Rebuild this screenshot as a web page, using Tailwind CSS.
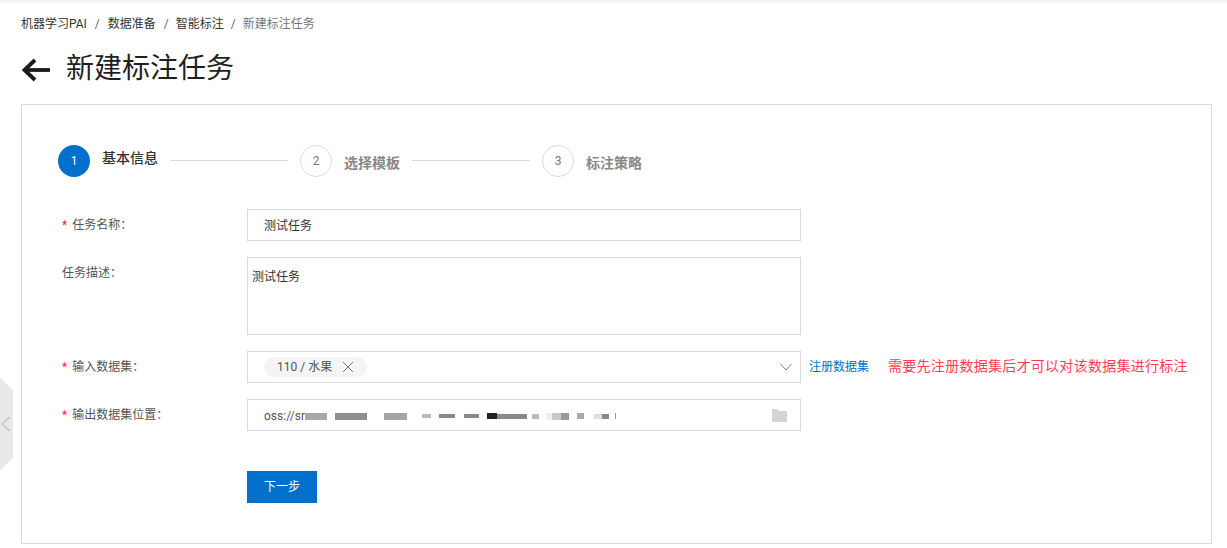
<!DOCTYPE html>
<html lang="zh">
<head>
    <meta charset="UTF-8">
    <title>新建标注任务</title>
    <script src="https://cdn.jsdelivr.net/npm/@tailwindcss/browser@4"></script>
</head>
<body class="bg-white font-['Roboto','Noto_Sans_CJK_SC',sans-serif] text-[12px] text-[#333] overflow-hidden">
<div class="relative h-[548px] w-[1227px] overflow-hidden">
    <div class="h-[4px] bg-gradient-to-b from-[#eeeeee] to-white"></div>

    <!-- 面包屑 -->
    <div class="ml-[21px] mt-[12px] flex h-[16px] items-center leading-[16px]">
        <span>机器学习PAI</span><span class="mx-[8px] text-[#666]">/</span>
        <span>数据准备</span><span class="ml-[8px] mr-[7px] text-[#666]">/</span>
        <span>智能标注</span><span class="ml-[7px] mr-[7px] text-[#666]">/</span>
        <span class="text-[#777]">新建标注任务</span>
    </div>

    <!-- 标题 -->
    <div class="ml-[21px] mt-[19px] flex h-[36px] items-center">
        <svg class="mt-[2px] h-[24px] w-[30px]" viewBox="0 0 30 24" fill="none" stroke="#1a1a1a" stroke-width="3.8">
            <path d="M29 12H4"/>
            <path d="M14 2 3.5 12 14 22"/>
        </svg>
        <h1 class="ml-[15px] text-[28px] leading-[36px] font-normal text-[#1f1f1f]">新建标注任务</h1>
    </div>

    <!-- 卡片 -->
    <div class="ml-[21px] mt-[17px] h-[440px] w-[1191px] border border-[#dcdcdc] pl-[36px] pt-[40px]">
        <!-- 步骤条 -->
        <div class="flex h-[32px] items-center">
            <div class="flex h-[32px] w-[32px] items-center justify-center rounded-full bg-[#0070cc] text-[12px] text-white">1</div>
            <span class="ml-[12px] mb-[6px] text-[14px] font-medium text-[#333]">基本信息</span>
            <div class="ml-[12px] mt-[-1px] h-px w-[118px] bg-[#dcdcdc]"></div>
            <div class="ml-[12px] flex h-[32px] w-[32px] items-center justify-center rounded-full border border-[#dcdcdc] text-[12px] text-[#777]">2</div>
            <span class="ml-[12px] mt-[4px] text-[14px] font-semibold text-[#888]">选择模板</span>
            <div class="ml-[12px] mt-[-1px] h-px w-[118px] bg-[#dcdcdc]"></div>
            <div class="ml-[12px] flex h-[32px] w-[32px] items-center justify-center rounded-full border border-[#dcdcdc] text-[12px] text-[#777]">3</div>
            <span class="ml-[12px] mt-[4px] text-[14px] font-semibold text-[#888]">标注策略</span>
        </div>

        <!-- 表单 -->
        <div class="mt-[32px] ml-[4px] flex flex-col gap-[16px]">
            <div class="flex">
                <label class="w-[185px] pt-[7px] leading-[18px] text-[#555]"><span class="mr-[2px] text-[#e62e2e]">*</span> 任务名称：</label>
                <div class="flex h-[32px] w-[554px] items-center border border-[#dcdcdc] pl-[16px] pt-[2px] text-[#333]">测试任务</div>
            </div>
            <div class="flex">
                <label class="w-[185px] pt-[7px] leading-[18px] text-[#555]">任务描述：</label>
                <div class="h-[78px] w-[554px] border border-[#dcdcdc] pl-[4px] pt-[10px] leading-[18px] text-[#333]">测试任务</div>
            </div>
            <div class="flex">
                <label class="w-[185px] pt-[7px] leading-[18px] text-[#555]"><span class="mr-[2px] text-[#e62e2e]">*</span> 输入数据集：</label>
                <div class="flex h-[32px] w-[554px] items-center justify-between border border-[#dcdcdc] pl-[16px] pr-[8px]">
                    <div class="flex h-[20px] w-[103px] items-center rounded-full bg-[#f4f4f4] pl-[13px] text-[#555]">
                        <span>110 / 水果</span>
                        <svg class="ml-[10px] h-[12px] w-[12px]" viewBox="0 0 12 12" fill="none" stroke="#777" stroke-width="1"><path d="M1 1l10 10M11 1 1 11"/></svg>
                    </div>
                    <svg class="h-[8px] w-[12px]" viewBox="0 0 12 8" fill="none" stroke="#777" stroke-width="1"><path d="M.5 1 6 7l5.5-6"/></svg>
                </div>
                <a class="ml-[8px] pt-[7px] leading-[18px] text-[#0070cc]">注册数据集</a>
                <span class="ml-[19px] pt-[5px] text-[14px] leading-[20px] tracking-[0.28px] text-[#ff3b57]">需要先注册数据集后才可以对该数据集进行标注</span>
            </div>
            <div class="flex">
                <label class="w-[185px] pt-[7px] leading-[18px] text-[#555]"><span class="mr-[2px] text-[#e62e2e]">*</span> 输出数据集位置：</label>
                <div class="flex h-[32px] w-[554px] items-center justify-between border border-[#dcdcdc] pl-[16px] pr-[13px]">
                    <div class="flex items-center pt-[2px] text-[#555]">
                        <span>oss://sr</span>
                        <!-- 打码部分 -->
                        <div class="flex h-[7px] items-center">
                            <i class="h-[7px] w-[22px] bg-[#a8a8a8]"></i><i class="ml-[8px] h-[7px] w-[32px] bg-[#8f8f8f]"></i><i class="ml-[17px] h-[7px] w-[23px] bg-[#a5a5a5]"></i>
                            <i class="ml-[15px] h-[4px] w-[9px] bg-[#bbbbbb]"></i><i class="ml-[8px] h-[4px] w-[16px] bg-[#888]"></i><i class="ml-[9px] h-[4px] w-[15px] bg-[#888]"></i>
                            <i class="ml-[8px] h-[6px] w-[10px] bg-[#222]"></i><i class="h-[5px] w-[30px] bg-[#888]"></i>
                            <i class="ml-[5px] h-[5px] w-[7px] bg-[#bbb]"></i><i class="ml-[7px] h-[7px] w-[6px] bg-[#eee]"></i><i class="h-[7px] w-[9px] bg-[#c8c8c8]"></i><i class="h-[7px] w-[8px] bg-[#999]"></i>
                            <i class="ml-[8px] h-[6px] w-[7px] bg-[#aaa]"></i><i class="ml-[10px] h-[5px] w-[8px] bg-[#ddd]"></i><i class="h-[5px] w-[7px] bg-[#888]"></i>
                            <i class="ml-[6px] h-[6px] w-px bg-[#999]"></i>
                        </div>
                    </div>
                    <svg class="h-[13px] w-[15px]" viewBox="0 0 15 13" fill="#d3d5d5"><path d="M0 1a1 1 0 0 1 1-1h4.5L7 2h7a1 1 0 0 1 1 1v9a1 1 0 0 1-1 1H1a1 1 0 0 1-1-1z"/></svg>
                </div>
            </div>
            <div class="mt-[24px] ml-[185px]">
                <button class="h-[32px] w-[70px] bg-[#0070cc] text-[12px] text-white">下一步</button>
            </div>
        </div>
    </div>

    <!-- 侧边收起按钮 -->
    <div class="absolute left-0 top-[377px] flex h-[94px] w-[13px] items-center bg-[#e9e9e9] [clip-path:polygon(0_0,100%_14%,100%_86%,0_100%)]">
        <svg class="ml-[1px] h-[16px] w-[10px]" viewBox="0 0 10 16" fill="none" stroke="#aaa" stroke-width="1"><path d="M9 1 1 8l8 7"/></svg>
    </div>
</div>
</body>
</html>
